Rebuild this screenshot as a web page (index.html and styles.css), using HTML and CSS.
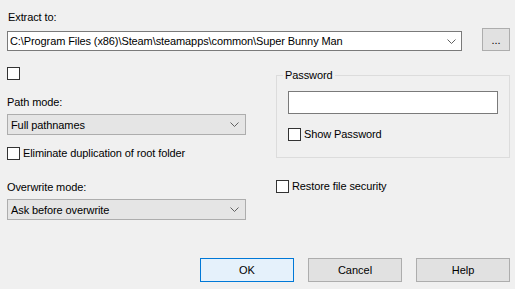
FILE: index.html
```html
<!DOCTYPE html>
<html lang="en">
<head>
    <meta charset="UTF-8">
    <meta name="viewport" content="width=device-width, initial-scale=1.0">
    <title>Extraction path and options</title>
    <link rel="stylesheet" href="styles.css">
</head>
<body>
    <div class="dialog">
        <div class="label first">Extract to:</div>
        <div class="path-row">
            <div class="combo">
                <span class="combo-text">C:\Program Files (x86)\Steam\steamapps\common\Super Bunny Man</span>
                <svg class="chevron" width="9" height="5" viewBox="0 0 9 5"><path d="M0.5 0.5 L4.5 4.5 L8.5 0.5" fill="none" stroke="#606060" stroke-width="1"/></svg>
            </div>
            <button class="btn browse">...</button>
        </div>

        <div class="columns">
            <div class="left-col">
                <input type="checkbox" class="check lone">

                <div class="label path-label">Path mode:</div>
                <div class="select">
                    <span>Full pathnames</span>
                    <svg class="chevron" width="9" height="5" viewBox="0 0 9 5"><path d="M0.5 0.5 L4.5 4.5 L8.5 0.5" fill="none" stroke="#606060" stroke-width="1"/></svg>
                </div>

                <label class="check-row elim">
                    <input type="checkbox" class="check">
                    <span>Eliminate duplication of root folder</span>
                </label>

                <div class="label over-label">Overwrite mode:</div>
                <div class="select">
                    <span>Ask before overwrite</span>
                    <svg class="chevron" width="9" height="5" viewBox="0 0 9 5"><path d="M0.5 0.5 L4.5 4.5 L8.5 0.5" fill="none" stroke="#606060" stroke-width="1"/></svg>
                </div>
            </div>

            <div class="right-col">
                <fieldset class="group">
                    <legend>Password</legend>
                    <input type="password" class="password">
                    <label class="check-row show">
                        <input type="checkbox" class="check">
                        <span>Show Password</span>
                    </label>
                </fieldset>

                <label class="check-row restore">
                    <input type="checkbox" class="check">
                    <span>Restore file security</span>
                </label>
            </div>
        </div>

        <div class="footer">
            <button class="btn action default">OK</button>
            <button class="btn action">Cancel</button>
            <button class="btn action">Help</button>
        </div>
    </div>
</body>
</html>
```

FILE: styles.css
```css
body {
    margin: 0;
    background-color: #f0f0f0;
    font-family: 'Liberation Sans', Arial, sans-serif;
    font-size: 11px;
    letter-spacing: -0.1px;
    color: #000;
}

.dialog {
    height: 289px;
    box-sizing: border-box;
    padding: 0 5px 7px 7px;
    display: flex;
    flex-direction: column;
}

.label {
    line-height: 14px;
    height: 14px;
}
.label.first { margin-top: 10px; margin-left: 1px; }

.path-row {
    display: flex;
    align-items: flex-start;
    margin-top: 4px;
}

.combo {
    width: 455px;
    height: 20px;
    margin-top: 3px;
    box-sizing: border-box;
    border: 1px solid #7a7a7a;
    background: #fff;
    display: flex;
    align-items: center;
    padding: 0 5px 0 2px;
}
.combo-text { flex: 1; white-space: nowrap; overflow: hidden; }

.chevron { display: block; flex: none; }

.btn {
    font-family: inherit;
    font-size: 11px;
    color: #000;
    box-sizing: border-box;
    border: 1px solid #adadad;
    background: #e1e1e1;
    padding: 0;
    margin: 0;
}
.browse {
    width: 28px;
    height: 23px;
    margin-left: 20px;
    line-height: 18px;
}

.columns {
    display: flex;
}

.left-col {
    width: 240px;
    display: flex;
    flex-direction: column;
}

.right-col {
    width: 234px;
    margin-left: 30px;
    display: flex;
    flex-direction: column;
}

.check {
    appearance: none;
    -webkit-appearance: none;
    width: 13px;
    height: 13px;
    margin: 0;
    box-sizing: border-box;
    border: 1px solid #333;
    background: #fff;
    flex: none;
}
.check.lone { margin-top: 16px; margin-left: 0; }

.path-label { margin-top: 15px; }
.over-label { margin-top: 20px; }

.select {
    height: 21px;
    margin-top: 5px;
    box-sizing: border-box;
    border: 1px solid #adadad;
    background: #e5e5e5;
    display: flex;
    align-items: center;
    justify-content: space-between;
    padding: 0 6px 0 3px;
}

.check-row {
    display: flex;
    align-items: center;
    gap: 3px;
    height: 13px;
    line-height: 13px;
}
.elim { margin-top: 12px; }

.group {
    margin: 17px 0 0 0;
    padding: 9px 11px 16px 11px;
    border: 1px solid #dcdcdc;
    min-width: 0;
}
.group legend {
    padding: 0 2px;
    margin-left: -5px;
    line-height: 14px;
}

.password {
    display: block;
    width: 210px;
    height: 23px;
    margin: 0;
    box-sizing: border-box;
    border: 1px solid #7a7a7a;
    background: #fff;
}
.show { margin-top: 14px; }
.restore { margin-top: 22px; }

.footer {
    margin-top: auto;
    display: flex;
    justify-content: flex-end;
    gap: 14px;
}
.action {
    width: 94px;
    height: 24px;
}
.action.default {
    background: #e5f1fb;
    border-color: #0078d7;
}
```
